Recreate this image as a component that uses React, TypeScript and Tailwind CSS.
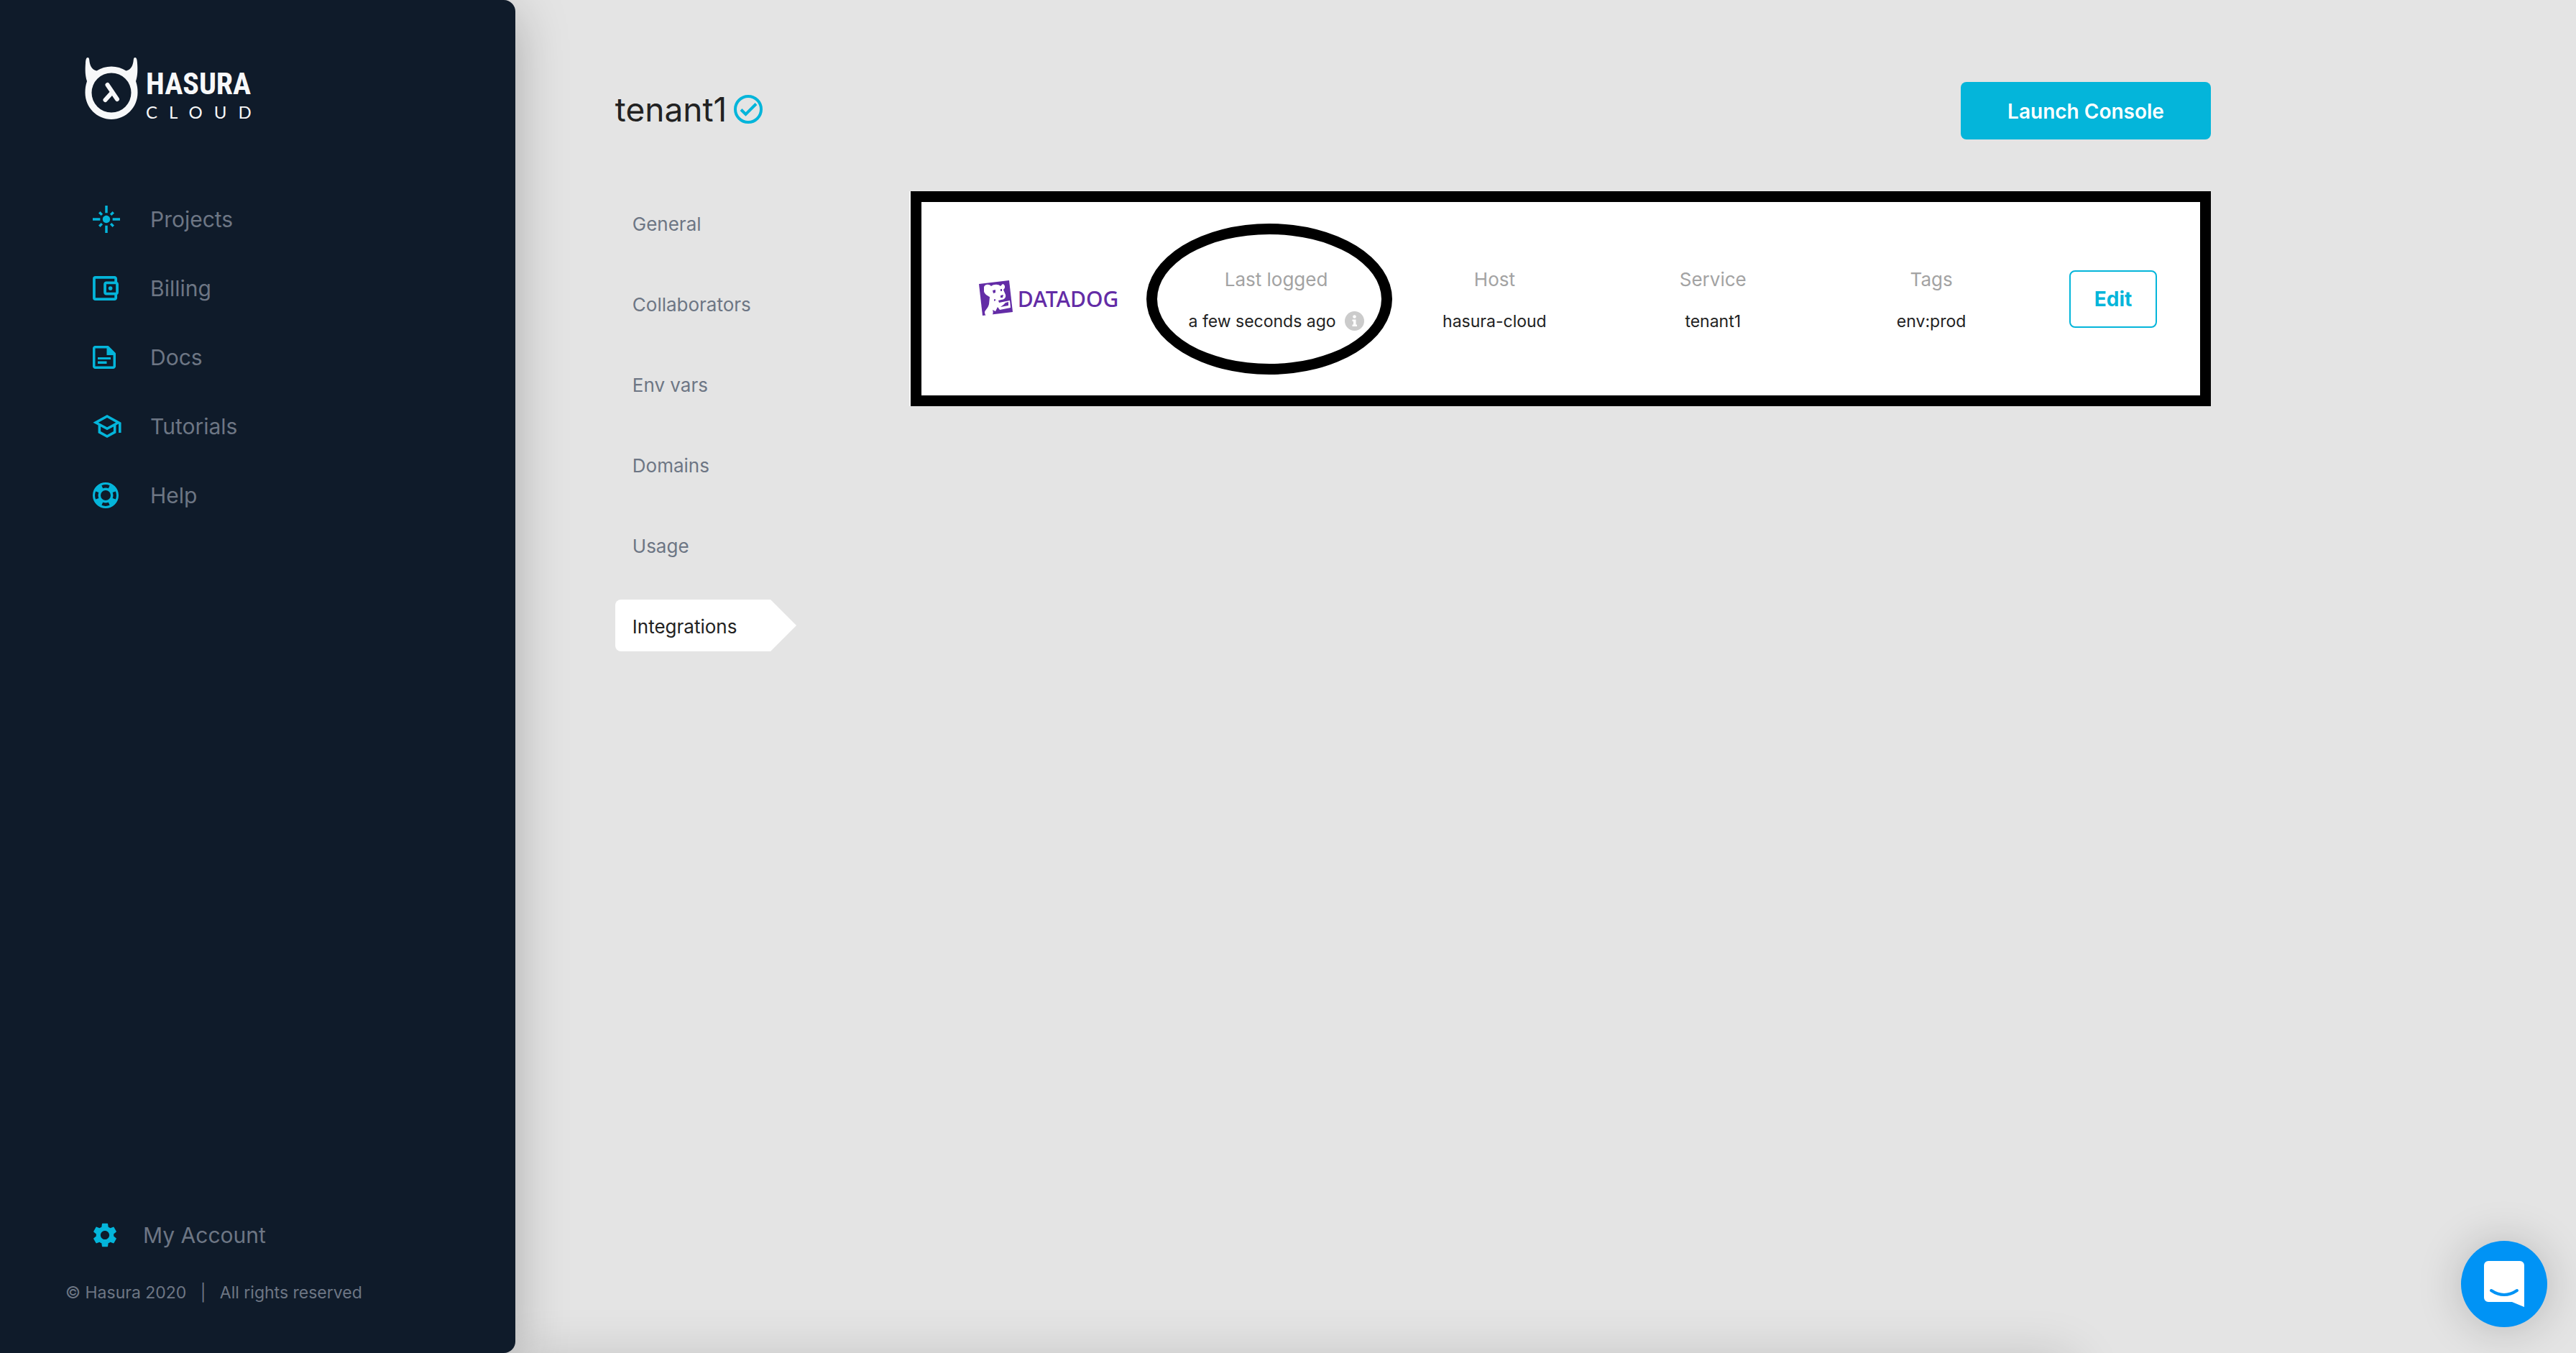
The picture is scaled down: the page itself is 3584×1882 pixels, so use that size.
import { MdFlare, MdOutlineAccountBalanceWallet, MdOutlineSchool, MdSettings } from "react-icons/md";
import type { ReactNode } from "react";

function HasuraMark() {
  return (
    <svg viewBox="0 0 74 86" className="h-[86px] w-[74px]" aria-hidden="true">
      <path
        fill="#f7f8f9"
        fillRule="evenodd"
        d="M4 0C5.500 0 6 1 6.200 3C7 12 10 17 16.500 18.500C22.500 14.500 29.500 12.500 37 12.500C44.500 12.500 51.500 14.500 57.500 18.500C64 17 67 12 67.800 3C68 1 68.500 0 70 0C72 0 72.800 3 73 8C73.600 17 73.600 25 71 33C73 39 73.500 43 73.500 49C73.500 69.500 57 86 37 86C17 86 .500 69.500 .500 49C.500 43 1 39 3 33C.400 25 .400 17 1 8C1.200 3 2 0 4 0ZM37 21.500A27.500 27.500 0 1 0 37 76.500A27.500 27.500 0 1 0 37 21.500Z"
      />
      <path d="M31.500 38L45 58M37.500 49L28.500 59" fill="none" stroke="#f7f8f9" strokeWidth="6" strokeLinecap="round" />
    </svg>
  );
}

function DocIcon() {
  return (
    <svg viewBox="0 0 32 32" className="size-8" aria-hidden="true">
      <path d="M4 1.750H21L30.250 11V28a2 2 0 0 1-2 2.250H4a2 2 0 0 1-2.250-2.250V4a2 2 0 0 1 2.250-2.250Z" fill="none" stroke="#04b5da" strokeWidth="3.500" strokeLinejoin="round" />
      <path d="M19.500 1h2.500l9 9v3H19.500ZM7 16h18v3H7ZM7 21.500h12.500v3.500H7Z" fill="#04b5da" />
    </svg>
  );
}

function HelpIcon() {
  return (
    <svg viewBox="0 0 36 36" className="size-9" aria-hidden="true">
      <circle cx="18" cy="18" r="12.500" fill="none" stroke="#04b5da" strokeWidth="11" />
      <circle cx="18" cy="18" r="12.700" fill="none" stroke="#0f1b2a" strokeWidth="4.500" pathLength="360" strokeDasharray="44 46" strokeDashoffset="22" />
    </svg>
  );
}

function DatadogMark() {
  return (
    <svg viewBox="0 0 48 52" className="h-[52px] w-12" aria-hidden="true">
      <path d="M0 5L42 0L47 44L5 49Z" fill="#632ca6" />
      <path
        fill="#fff"
        d="M7 9C9 5 14 5 17 8C21 5 27 5 30 8L33 5C37 6 37 11 34 13L37 20C38 24 35 27 31 27L27 28L28 31L43 28L44 38L29 41L26 37L23 43L19 41C21 46 18 50 15 52C11 52 8 48 8 44C9 41 13 38 14 33L15 23C11 21 7 18 7 15Z"
      />
      <path d="M19 14l4-1l0 4l-3 1zM30 12l2 0l0 3l-2 0zM30 21l4-1l-1 4l-3 0zM21 26l3 1l-3 2zM37 31l4-1l0 5l-11 2l4-3z" fill="#632ca6" />
    </svg>
  );
}

const navItems: { label: string; icon: ReactNode }[] = [
  { label: "Projects", icon: <MdFlare viewBox="1 1 22 22" className="size-[38px] text-[#04b5da]" /> },
  { label: "Billing", icon: <MdOutlineAccountBalanceWallet viewBox="3 3 19 18" className="h-[34px] w-9 text-[#04b5da]" /> },
  { label: "Docs", icon: <DocIcon /> },
  { label: "Tutorials", icon: <MdOutlineSchool viewBox="1 3 22 18" className="h-8 w-10 text-[#04b5da]" /> },
  { label: "Help", icon: <HelpIcon /> },
];

const tabs = ["General", "Collaborators", "Env vars", "Domains", "Usage"];

const fields = [
  { label: "Host", value: "hasura-cloud" },
  { label: "Service", value: "tenant1" },
  { label: "Tags", value: "env:prod" },
];

function Sidebar() {
  return (
    <aside className="relative z-10 flex w-1/5 shrink-0 flex-col rounded-r-2xl bg-[#0f1b2a] pb-[68px] shadow-[0_16px_72px_rgba(0,0,0,0.26)]">
      <a href="#home" className="mt-20 ml-[118px] flex h-[86px] gap-[11px] self-start text-[#f7f8f9]" aria-label="Hasura Cloud">
        <HasuraMark />
        <span className="flex flex-col">
          <span className="mt-3.5 font-['Roboto_Condensed','Liberation_Sans_Narrow','Liberation_Sans',sans-serif] text-[42px] leading-[46px] font-bold">HASURA</span>
          <span className="font-['Lato',sans-serif] text-2xl leading-8 tracking-[16px]">CLOUD</span>
        </span>
      </a>
      <nav className="mt-[91px] flex flex-col">
        {navItems.map((item) => (
          <a key={item.label} href={`#${item.label.toLowerCase()}`} className="flex h-24 items-center pl-[129px]">
            <span className="w-20">{item.icon}</span>
            <span className="text-[30px] text-[#6d7684]">{item.label}</span>
          </a>
        ))}
      </nav>
      <a href="#account" className="mt-auto flex items-center pl-[129px]">
        <MdSettings viewBox="2 2 20 20" className="mr-9 size-[34px] text-[#04b5da]" />
        <span className="text-[30px] leading-10 text-[#6d7684]">My Account</span>
      </a>
      <p className="mt-11 pl-[91px] text-[23px] leading-8 whitespace-pre text-[#6d7684]">
        © Hasura 2020{"   |   "}All rights reserved
      </p>
    </aside>
  );
}

function IntegrationCard() {
  return (
    <section className="grid h-[299px] flex-1 grid-cols-[repeat(5,minmax(0,1fr))_162px] items-center border-[15px] border-black bg-white pr-[60px] pl-[38px] shadow-[-2px_0_0_#f4f4f4]">
      <div className="flex items-center gap-1.5 pl-[42px]">
        <DatadogMark />
        <span className="font-['Noto_Sans',sans-serif] text-[30px] leading-10 font-medium text-[#632ca6]">DATADOG</span>
      </div>
      <div className="relative flex flex-col items-center gap-[26px] pt-1 text-center">
        <span className="text-[26px] leading-8 text-[#a3a3a3]">Last logged</span>
        <span className="flex items-center gap-3 text-[23px] leading-8 text-[#222]">
          a few seconds ago
          <svg viewBox="0 0 27 27" className="size-[27px]" aria-label="info">
            <circle cx="13.500" cy="13.500" r="13.500" fill="#cbcbcb" />
            <circle cx="13.500" cy="7.500" r="2.300" fill="#fff" />
            <path d="M10.500 11.500h5v7h1.500v2.500h-6.500v-2.500h1.500v-4.500h-1.500z" fill="#fff" />
          </svg>
        </span>
        <span className="pointer-events-none absolute top-1/2 left-1/2 h-[210px] w-[342px] -translate-x-[181px] -translate-y-1/2 rounded-[50%] border-[15px] border-black" />
      </div>
      {fields.map((field) => (
        <div key={field.label} className="flex flex-col items-center gap-[26px] pt-1 text-center">
          <span className="text-[26px] leading-8 text-[#a3a3a3]">{field.label}</span>
          <span className="text-[23px] leading-8 text-[#222]">{field.value}</span>
        </div>
      ))}
      <button type="button" className="h-20 w-[122px] justify-self-end rounded-lg border-2 border-[#04b5da] text-[28px] font-bold text-[#04b5da]">
        Edit
      </button>
    </section>
  );
}

export default function App() {
  return (
    <div className="relative flex min-h-screen overflow-hidden bg-[#e4e4e4] font-['Inter',sans-serif]">
      <Sidebar />
      <main className="mr-[508px] ml-[139px] flex-1 pt-[114px]">
        <header className="flex h-20 items-center justify-between">
          <h1 className="flex items-center gap-2.5 pb-1 text-[46px] text-[#222]">
            tenant1
            <svg viewBox="0 0 40 40" className="size-10" fill="none" stroke="#04b5da" aria-label="active">
              <circle cx="20" cy="20" r="18" strokeWidth="4" />
              <path d="M10 20.500L16.500 27L31 12.500" strokeWidth="4" />
            </svg>
          </h1>
          <button type="button" className="h-20 w-[348px] rounded-lg bg-[#04b5da] pt-0.5 text-[28px] font-semibold text-white">
            Launch Console
          </button>
        </header>
        <div className="mt-[72px] flex">
          <nav className="mt-2 flex w-[411px] shrink-0 flex-col gap-10 text-[26px] leading-[75px] text-[#6d7684]">
            {tabs.map((tab) => (
              <a key={tab} href={`#${tab.toLowerCase()}`} className="h-[72px] pl-6">
                {tab}
              </a>
            ))}
            <a href="#integrations" aria-current="page" className="flex h-[72px] text-[#222]">
              <span className="w-[216px] rounded-l-lg bg-white pl-6">Integrations</span>
              <svg viewBox="0 0 36 72" className="h-[72px] w-9" aria-hidden="true">
                <path d="M0 0L36 36L0 72Z" fill="#fff" />
              </svg>
            </a>
          </nav>
          <IntegrationCard />
        </div>
      </main>
      <div className="pointer-events-none absolute top-full right-[700px] left-1/5 mt-2 h-20 shadow-[0_0_72px_rgba(0,0,0,0.16)]" />
      <button
        type="button"
        aria-label="Open chat"
        className="absolute right-10 bottom-9 flex size-[120px] items-center justify-center rounded-full bg-[#0093f5] shadow-[0_2px_64px_rgba(0,0,0,0.2)]"
      >
        <svg viewBox="0 0 56 64" className="h-16 w-14" aria-hidden="true">
          <path d="M6 0H50a6 6 0 0 1 6 6V64L39 57H6a6 6 0 0 1-6-6V6a6 6 0 0 1 6-6Z" fill="#fff" />
          <path d="M10 41Q28 53 46 41" fill="none" stroke="#0093f5" strokeWidth="4" strokeLinecap="round" />
        </svg>
      </button>
    </div>
  );
}
